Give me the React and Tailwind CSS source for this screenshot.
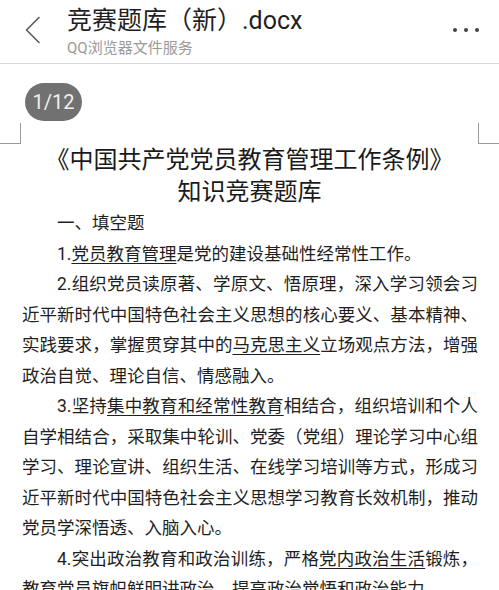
import React from "react";

const FONT = { fontFamily: 'Roboto, "Noto Sans CJK SC", sans-serif' };

function U({ children }) {
  return (
    <span className="underline decoration-1 underline-offset-[3px]">{children}</span>
  );
}

function P({ children, indent = true }) {
  return (
    <p className={`text-justify ${indent ? "indent-[35px]" : ""}`}>{children}</p>
  );
}

export default function App() {
  return (
    <div className="w-[499px] h-[590px] overflow-hidden bg-white" style={FONT}>
      {/* header */}
      <div className="h-[64px] border-b border-[#d9d9d9] flex items-start">
        <div className="w-[67px] pl-[25px] pt-[16px] shrink-0">
          <svg width="16" height="28" viewBox="0 0 16 28" fill="none">
            <path d="M14 1.5 L1.5 14 L14 26.5" stroke="#5a5a5a" strokeWidth="1.6" strokeLinecap="round" strokeLinejoin="round" />
          </svg>
        </div>
        <div className="flex-1 pt-[6px]">
          <div className="text-[25px] leading-[30px] text-[#1f1f1f]">竞赛题库（新）.docx</div>
          <div className="text-[15px] leading-[18px] mt-[3px] text-[#9a9a9a]">QQ浏览器文件服务</div>
        </div>
        <div className="flex gap-[7px] pt-[28px] pr-[20px]">
          <span className="w-[4px] h-[4px] rounded-full bg-[#444]" />
          <span className="w-[4px] h-[4px] rounded-full bg-[#444]" />
          <span className="w-[4px] h-[4px] rounded-full bg-[#444]" />
        </div>
      </div>

      {/* page badge */}
      <div className="pl-[25px] pt-[19px]">
        <div className="w-[57px] h-[38px] rounded-full bg-[#717171] text-[#f0f0f0] text-[20px] flex items-center justify-center">
          1/12
        </div>
      </div>

      {/* corner marks */}
      <div className="flex justify-between mt-[2px] h-[21px]">
        <div className="w-[21px] h-[21px] border-r border-b border-[#9a9a9a]" />
        <div className="w-[21px] h-[21px] border-l border-b border-[#9a9a9a]" />
      </div>

      {/* document */}
      <div className="text-center text-[24px] leading-[32px] text-[#1a1a1a]">
        <div>《中国共产党党员教育管理工作条例》</div>
        <div>知识竞赛题库</div>
      </div>

      <div className="pl-[22px] w-[478px] text-[17.5px] leading-[30.5px] text-[#1f1f1f]">
        <P>一、填空题</P>
        <P>
          1.<U>党员教育管理</U>是党的建设基础性经常性工作。
        </P>
        <P>
          2.组织党员读原著、学原文、悟原理，深入学习领会习近平新时代中国特色社会主义思想的核心要义、基本精神、实践要求，掌握贯穿其中的<U>马克思主义</U>立场观点方法，增强政治自觉、理论自信、情感融入。
        </P>
        <P>
          3.坚持<U>集中教育和经常性教育</U>相结合，组织培训和个人自学相结合，采取集中轮训、党委（党组）理论学习中心组学习、理论宣讲、组织生活、在线学习培训等方式，形成习近平新时代中国特色社会主义思想学习教育长效机制，推动党员学深悟透、入脑入心。
        </P>
        <P>
          4.突出政治教育和政治训练，严格<U>党内政治生活</U>锻炼，教育党员旗帜鲜明讲政治，提高政治觉悟和政治能力。
        </P>
      </div>
    </div>
  );
}
